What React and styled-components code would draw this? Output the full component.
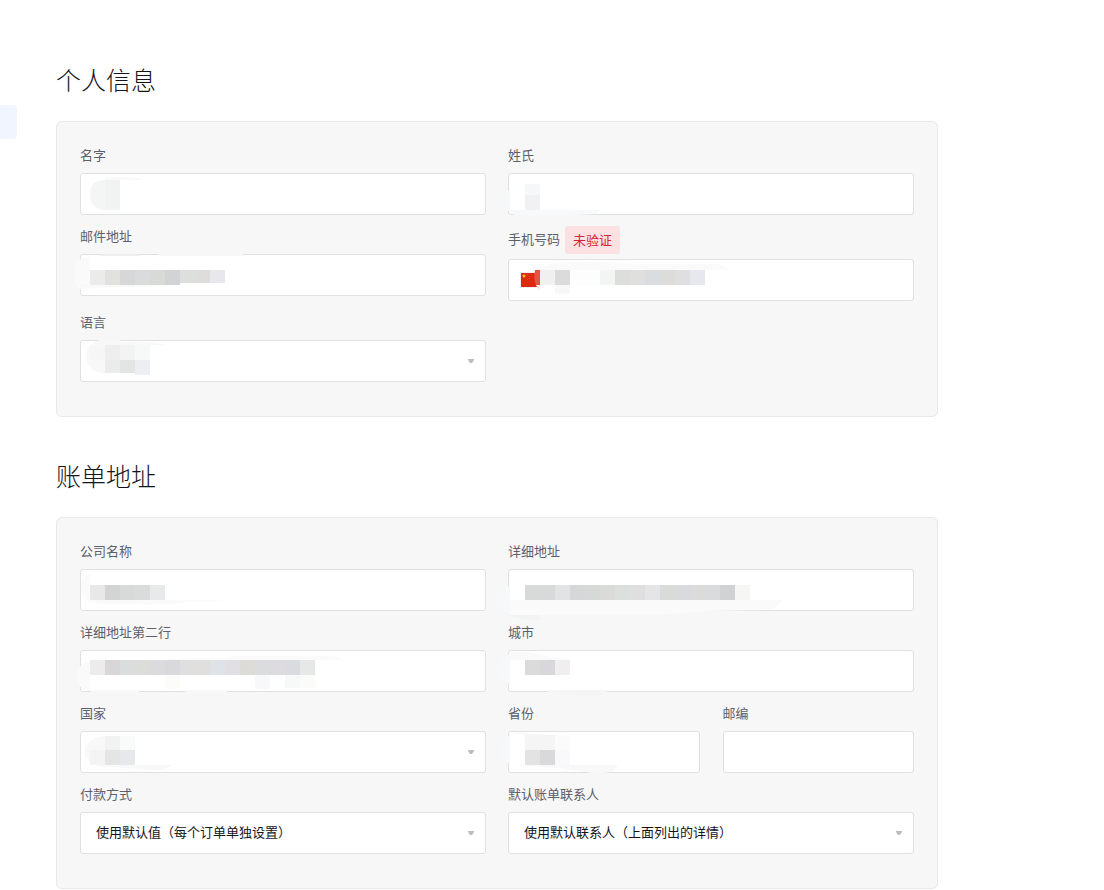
import React from "react";
import styled, { createGlobalStyle } from "styled-components";

const GlobalStyle = createGlobalStyle`
  *, *::before, *::after { box-sizing: border-box; }
  body {
    margin: 0;
    background: #ffffff;
    color: #14141c;
    font-family: "Noto Sans CJK SC", "Liberation Sans", sans-serif;
    font-size: 13px;
  }
`;

const Page = styled.div`
  display: flex;
  align-items: flex-start;
`;

const SideRail = styled.aside`
  flex: 0 0 17px;
  padding-top: 105px;
`;

const ActiveItem = styled.div`
  height: 34px;
  border-radius: 0 4px 4px 0;
  background: #f0f5ff;
`;

const Main = styled.main`
  flex: 1;
  min-width: 0;
  padding: 60px 166px 0 39px;
  display: flex;
  flex-direction: column;
  gap: 39px;
`;

const Section = styled.section`
  display: flex;
  flex-direction: column;
  gap: 23px;
`;

const Title = styled.h2`
  margin: 0;
  font-size: 25px;
  font-weight: 300;
  line-height: 38px;
`;

const Card = styled.div`
  display: grid;
  grid-template-columns: repeat(2, minmax(0, 1fr));
  gap: 11px 22px;
  padding: 23px 23px 34px;
  border: 1px solid #e7e8e9;
  border-radius: 6px;
  background: #f7f7f7;
`;

const Split = styled.div`
  display: grid;
  grid-template-columns: repeat(2, minmax(0, 1fr));
  gap: 23px;
`;

const Field = styled.div`
  display: flex;
  flex-direction: column;
  gap: 5px;
  min-width: 0;
`;

const LabelRow = styled.div`
  display: flex;
  align-items: center;
  gap: 5px;
`;

const Label = styled.label`
  padding-bottom: 3px;
  color: #5d606b;
  line-height: 20px;
`;

const Badge = styled.span`
  padding: 0 8px;
  border-radius: 3px;
  background: #fbe1e1;
  color: #dc1f38;
  line-height: 28px;
`;

const Control = styled.div`
  position: relative;
  display: flex;
`;

const TextInput = styled.input`
  flex: 1;
  min-width: 0;
  height: 42px;
  padding: 0 15px;
  border: 1px solid #dfe0e2;
  border-radius: 3px;
  background: #ffffff;
  color: inherit;
  font: inherit;
`;

const Select = styled.select`
  flex: 1;
  min-width: 0;
  height: 42px;
  padding: 0 32px 3px 15px;
  border: 1px solid #dfe0e2;
  border-radius: 3px;
  background: #ffffff;
  color: inherit;
  font: inherit;
  appearance: none;
`;

const Arrow = styled.svg`
  position: absolute;
  top: 19px;
  right: 12px;
  pointer-events: none;
`;

const Overlay = styled.svg`
  position: absolute;
  top: 0;
  left: 0;
  overflow: visible;
  pointer-events: none;
`;

// Redaction marks: `paths` are brush strokes, `rows` are runs of 15px blocks.
const masks = {
  first: {
    paths: [
      ["M25 5 Q40 3 58 5 L64 7 H25Z", "#f9f9fa"],
      ["M25 7 V37 Q10 36 10 22 Q10 7 25 7Z", "#f5f5f5"],
    ],
    rows: [[25, 7, 30, ["#f1f3f3"]]],
  },
  last: {
    paths: [
      ["M0 18 H2 V38 H0 Q-3 28 0 18Z", "#f8f9fb"],
      ["M2 37 H92 L88 41 Q50 44 6 42Z", "#f8f9fb"],
    ],
    rows: [[17, 11, 11, ["#f6f7f9"]], [17, 22, 15, ["#f1f1f4"]]],
  },
  email: {
    paths: [
      ["M79 0 H163 V2 H79Z", "#f6f7f9"],
      ["M21 0 H59 V2 H21Z", "#eeeeee"],
      ["M10 3 V35 H0 Q-5 33 -5 25 V13 Q-5 4 10 3Z", "#fafafa"],
      ["M0 31 H95 Q60 33 30 33 Q10 35 0 32Z", "#f8f8f8"],
    ],
    rows: [
      [10, 16, 15, ["#ebebeb", "#e1e1dd", "#d7d7d8", "#dadbdd", "#d9d9d7", "#d2d3d5"]],
      [100, 16, 13, ["#dddfdc", "#dfdddb", "#e7e7ec"]],
    ],
  },
  phone: {
    paths: [["M31 11 Q36 6 45 4 Q95 2 130 5 L205 5 Q214 5 220 10 V11Z", "#fafafa"]],
    rows: [
      [32, 11, 15, ["#f0f0f0", "#dbdbdb", "#fdfdfd", "#fdfdfd", "#f3f4f4", "#dddddb", "#e0dfe0", "#d9dddf", "#dcdcda", "#dfdee1", "#e7e8ed"]],
      [47, 26, 9, ["#f8f8f8"]],
    ],
  },
  language: {
    paths: [
      ["M20 0 H40 V2 Q60 1 83 4 V5 H25 V34 Q6 30 6 16 Q6 6 20 0Z", "#f8f8f8"],
    ],
    rows: [
      [10, 5, 15, ["#f6f6f6", "#eeeeee", "#f3f3f3", "#f7f9f8"]],
      [25, 20, 13, ["#ebebeb", "#e2e5e4"]],
      [55, 20, 15, ["#edeef1"]],
    ],
  },
  company: {
    paths: [
      ["M10 5 V33 Q1 29 1 17 Q2 7 10 5Z", "#fafafa"],
      ["M5 31 H145 Q125 34 110 33 Q80 37 40 35 Q15 36 5 31Z", "#fafafa"],
    ],
    rows: [[10, 16, 15, ["#e8e8e8", "#d4d4d4", "#d8dad9", "#dadbda", "#e8e9eb"]]],
  },
  street: {
    paths: [
      ["M2 17 V44 Q-13 42 -13 29 Q-12 18 2 17Z", "#f7f8f9"],
      ["M2 46 H32 V51 Q15 52 2 47Z", "#f2f3f5"],
      ["M2 31 H274 Q268 41 258 41 L200 42 Q160 46 125 46 H2Z", "#fafafa"],
    ],
    rows: [[17, 16, 15, ["#d7dad9", "#d9d9d9", "#e2e3e5", "#d7d7da", "#d5d9d8", "#dadbd8", "#dbdfde", "#e0dfe0", "#e5e4e7", "#d9dbd9", "#d9dadd", "#dbdbd9", "#d9dbdd", "#d1d2d4", "#f6f6f5"]]],
  },
  street2: {
    paths: [
      ["M10 12 V41 Q-3 40 -3 26 Q-3 13 10 12Z", "#fafafa"],
      ["M90 9 Q120 8 145 8 L155 6 H240 Q258 5 264 10 H90Z", "#fafafa"],
      ["M11 40 H59 V42 H11Z M105 40 H147 V42 H105Z", "#f9f9f9"],
    ],
    rows: [
      [10, 10, 15, ["#ececec", "#d9d6d7", "#d9dddd", "#dcddd8", "#dbdbdd", "#d9d9db", "#e0dfe0", "#e0dfdd", "#dfe2e7", "#e1dfe1", "#dcdbd7", "#dbdcde", "#dddbdd", "#dadbde", "#e6e8e8"]],
      [85, 25, 14, ["#fcfcfb"]],
      [175, 25, 14, ["#f8f8fa"]],
      [205, 25, 13, ["#f7f9f9", "#fbfbfa"]],
    ],
  },
  city: {
    paths: [
      ["M2 4 V34 Q-11 31 -11 19 Q-10 6 2 4Z", "#f7f8f9"],
      ["M2 2 H20 Q35 7 62 9 V10 H2Z", "#fafafa"],
      ["M40 40 H101 Q95 47 78 47 L60 43 L40 42Z", "#f5f5f5"],
    ],
    rows: [[17, 10, 15, ["#dbdbdb", "#d7d7dc", "#f0eeef"]]],
  },
  country: {
    paths: [
      ["M25 5 V36 Q5 33 5 21 Q6 6 25 5Z", "#f8f8f8"],
      ["M14 34 H92 Q87 39 78 39 Q30 37 14 34Z", "#f8f8f8"],
    ],
    rows: [
      [25, 5, 14, ["#f2f2f2", "#f9fafa"]],
      [10, 19, 15, ["#f4f4f4", "#e5e5e5", "#e7e8eb"]],
    ],
  },
  province: {
    paths: [
      ["M2 4 V32 H0 Q-8 29 -6 15 Q-5 6 2 4Z", "#f7f8f9"],
      ["M3 2 H17 L43 4 H17Z", "#f8f8f8"],
      ["M8 34 H110 Q105 42 95 42 H85 L50 37Z", "#f8f8f8"],
    ],
    rows: [
      [17, 4, 15, ["#f5f5f5", "#f5f5f5", "#fbfbfc"]],
      [17, 19, 15, ["#e3e3e3", "#d9d9dc", "#f9f9fb"]],
    ],
  },
};

function Mask({ name }) {
  const mask = masks[name];
  if (!mask) return null;
  return (
    <Overlay width="280" height="42" aria-hidden="true">
      {mask.paths.map(([d, fill], i) => (
        <path key={i} d={d} fill={fill} />
      ))}
      {mask.rows.map(([x, y, height, fills]) =>
        fills.map((fill, i) => (
          <rect key={`${x}-${y}-${i}`} x={x + i * 15} y={y} width="15" height={height} fill={fill} shapeRendering="crispEdges" />
        ))
      )}
    </Overlay>
  );
}

function Flag() {
  return (
    <Overlay width="40" height="42" aria-hidden="true">
      <rect x="12" y="13" width="18" height="16" fill="#eeeef0" />
      <rect x="13" y="14" width="17" height="14" fill="#de2910" />
      <path d="M27 11 H32 V29 L29 28 Q25 22 27 11Z" fill="#e25443" />
      <path d="M28 26 H32 V31 L29 28Z" fill="#fbe3e0" />
      <path d="M16 15 l.6 1.3 1.4.1 -1 1 .3 1.4 -1.3-.7 -1.3.7 .3-1.4 -1-1 1.4-.1Z" fill="#ffcb00" />
      <path d="M19 15h1v1h-1z M21 17h1v1h-1z M21 19h1v1h-1z M19 20h1v1h-1z" fill="#e8501a" />
    </Overlay>
  );
}

function TextField({ name, label, badge, flag, type = "text" }) {
  return (
    <Field>
      <LabelRow>
        <Label htmlFor={name}>{label}</Label>
        {badge && <Badge>{badge}</Badge>}
      </LabelRow>
      <Control>
        <TextInput id={name} name={name} type={type} />
        {flag && <Flag />}
        <Mask name={name} />
      </Control>
    </Field>
  );
}

function SelectField({ name, label, value = "" }) {
  return (
    <Field>
      <LabelRow>
        <Label htmlFor={name}>{label}</Label>
      </LabelRow>
      <Control>
        <Select id={name} name={name}>
          <option>{value}</option>
        </Select>
        <Arrow width="6" height="4" viewBox="0 0 6 4" aria-hidden="true">
          <path d="M0 0 H6 V1 L4 4 H2 L0 1Z" fill="#b9bec5" />
        </Arrow>
        <Mask name={name} />
      </Control>
    </Field>
  );
}

export default function App() {
  return (
    <>
      <GlobalStyle />
      <Page>
        <SideRail>
          <ActiveItem />
        </SideRail>
        <Main>
          <Section>
            <Title>个人信息</Title>
            <Card>
              <TextField name="first" label="名字" />
              <TextField name="last" label="姓氏" />
              <TextField name="email" label="邮件地址" type="email" />
              <TextField name="phone" label="手机号码" badge="未验证" type="tel" flag />
              <SelectField name="language" label="语言" />
            </Card>
          </Section>
          <Section>
            <Title>账单地址</Title>
            <Card>
              <TextField name="company" label="公司名称" />
              <TextField name="street" label="详细地址" />
              <TextField name="street2" label="详细地址第二行" />
              <TextField name="city" label="城市" />
              <SelectField name="country" label="国家" />
              <Split>
                <TextField name="province" label="省份" />
                <TextField name="postcode" label="邮编" />
              </Split>
              <SelectField name="payment" label="付款方式" value="使用默认值（每个订单单独设置）" />
              <SelectField name="contact" label="默认账单联系人" value="使用默认联系人（上面列出的详情）" />
            </Card>
          </Section>
        </Main>
      </Page>
    </>
  );
}
